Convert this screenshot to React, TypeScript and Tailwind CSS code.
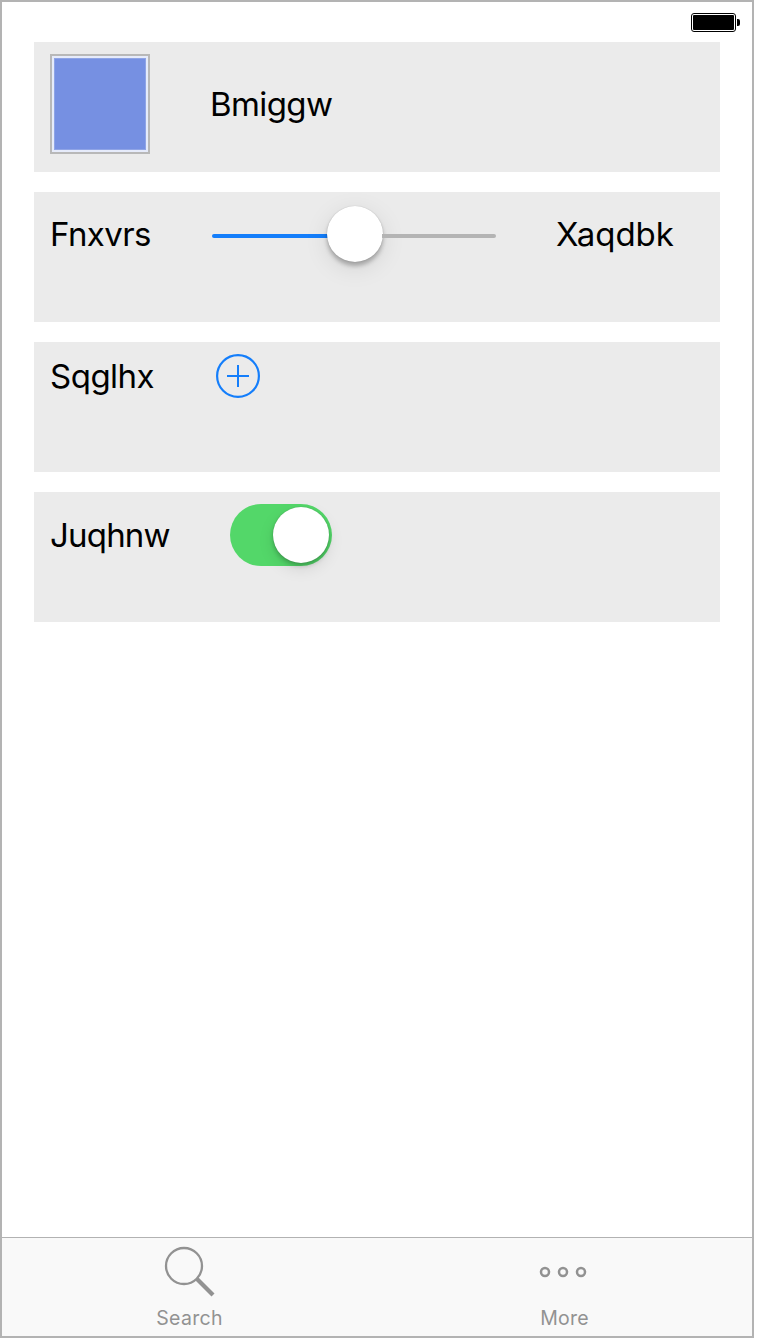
import type { ReactNode } from "react";

function Row({ children }: { children: ReactNode }) {
  return <section className="flex h-[130px] items-start bg-[#ebebeb] pl-4">{children}</section>;
}

function Battery() {
  return (
    <svg width="50" height="20" viewBox="0 0 50 20" className="block">
      <rect x="0.5" y="0.5" width="44" height="18" rx="2.5" fill="#fff" stroke="#000" />
      <rect x="2" y="2" width="41" height="15" rx="1" fill="#000" />
      <path d="M46 6h1a2 2 0 0 1 2 2v3a2 2 0 0 1-2 2h-1z" fill="#000" />
    </svg>
  );
}

const label = "block whitespace-nowrap text-[33px] leading-10";

export default function App() {
  return (
    <div className="h-[1340px] w-[760px] bg-white font-[Inter,sans-serif] text-black">
      <main className="flex h-[1338px] w-[754px] flex-col border-2 border-[#b3b3b3] bg-white">
        <header className="flex h-10 justify-end pt-[11px] pr-[11px]">
          <Battery />
        </header>
        <div className="flex grow flex-col gap-5 pr-8 pl-8">
          <Row>
            <div className="mt-3 size-[100px] border-2 border-[#b8b8b8] bg-[#e6ebfa] p-0.5">
              <div className="size-full border border-[#8fa4e6] bg-[#7690e2]" />
            </div>
            <span className={`${label} mt-[42px] ml-[60px] tracking-[-0.6px]`}>Bmiggw</span>
          </Row>
          <Row>
            <span className={`${label} mt-[22px] w-[162px] tracking-[-0.6px]`}>Fnxvrs</span>
            <div className="mt-[14px] flex h-14 w-[284px] items-center">
              <div className="mt-1 h-1 w-[116px] rounded-l-full bg-[#147efb]" />
              <div className="-mx-px size-14 shrink-0 rounded-full bg-white shadow-[0_0_1px_rgba(0,0,0,0.25),0_4px_4px_rgba(0,0,0,0.26),0_6px_24px_rgba(0,0,0,0.1)]" />
              <div className="mt-1 h-1 grow rounded-r-full bg-[#b4b4b4]" />
            </div>
            <span className={`${label} mt-[22px] ml-[60px] tracking-[0px]`}>Xaqdbk</span>
          </Row>
          <Row>
            <span className={`${label} mt-[14px] w-[166px] tracking-[-0.5px]`}>Sqglhx</span>
            <svg width="44" height="44" viewBox="0 0 44 44" className="mt-3 block" fill="none" stroke="#147efb">
              <circle cx="22" cy="22" r="20.9" strokeWidth="2.2" />
              <path d="M11 22h22M22 11v22" strokeWidth="2" />
            </svg>
          </Row>
          <Row>
            <span className={`${label} mt-[23px] w-[180px] tracking-[-0.8px]`}>Juqhnw</span>
            <div className="mt-3 flex h-[62px] w-[102px] items-center justify-end rounded-full bg-[#53d769] pr-[3px]">
              <div className="size-14 rounded-full bg-white shadow-[0_0_1px_rgba(0,0,0,0.25),0_3px_4px_rgba(0,0,0,0.2),0_6px_16px_rgba(0,0,0,0.1)]" />
            </div>
          </Row>
        </div>
        <nav className="flex h-[99px] border-t border-[#b2b2b2] bg-[#f9f9f9] text-[19.5px] leading-6 text-[#929292]">
          <div className="flex w-[375px] flex-col items-center">
            <svg width="52" height="52" viewBox="0 0 52 52" className="mt-[7px] ml-px block" fill="none" stroke="#929292">
              <circle cx="20" cy="21" r="18" strokeWidth="2.3" />
              <path d="M33 34L49 50" strokeWidth="4.2" />
            </svg>
            <span className="mt-[9px] tracking-[0.3px]">Search</span>
          </div>
          <div className="flex grow flex-col items-center">
            <svg width="48" height="12" viewBox="0 0 48 12" className="mt-7 mr-[3px] block" fill="none" stroke="#929292" strokeWidth="2.5">
              <circle cx="6" cy="6" r="4" />
              <circle cx="24" cy="6" r="4" />
              <circle cx="42" cy="6" r="4" />
            </svg>
            <span className="mt-7 tracking-[0.2px]">More</span>
          </div>
        </nav>
      </main>
    </div>
  );
}
